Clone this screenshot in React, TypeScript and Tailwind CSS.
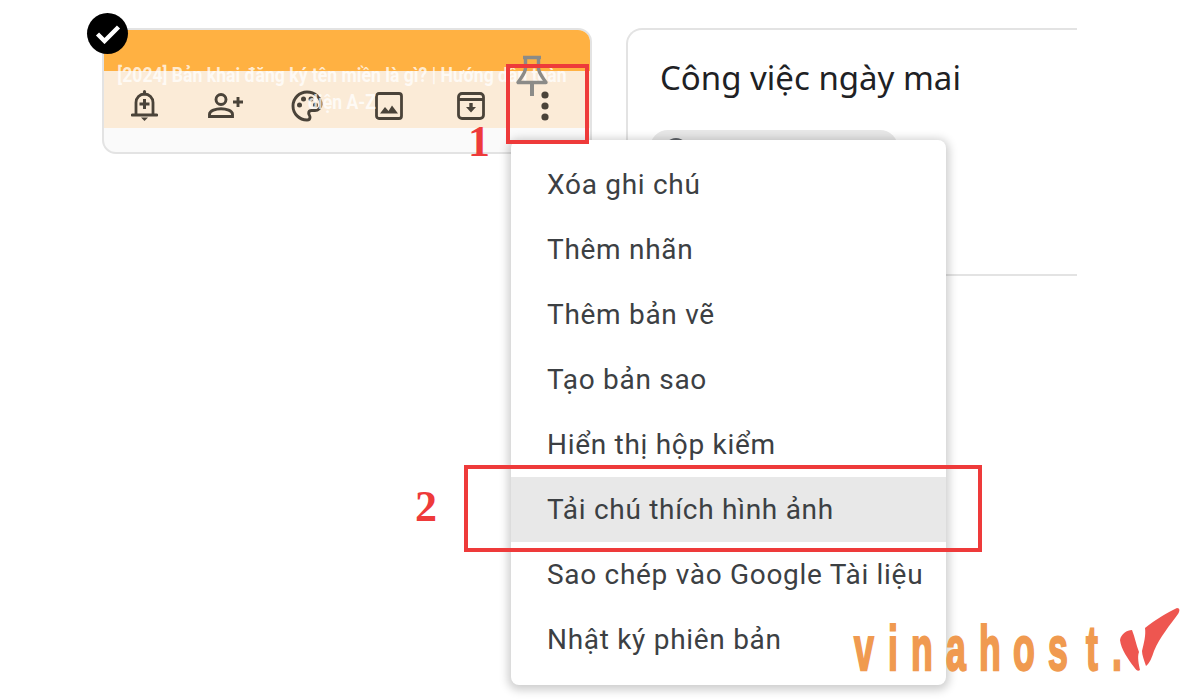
const ink = '#4a4339';

function BellIcon() {
  return (
    <svg width="27" height="31" viewBox="0 0 27 31" fill="none" stroke={ink} strokeWidth="2.8">
      <path d="M5 25V12.5a8.5 8.5 0 0 1 17 0V25" />
      <path d="M1.5 25h24" strokeWidth="3.2" strokeLinecap="round" />
      <path d="M13.5 1.5v2.5" strokeWidth="3" strokeLinecap="round" />
      <path d="M13.5 9v10M8.5 14h10" strokeWidth="3" />
      <path d="M10 27.5h7l-3.5 3.5z" fill={ink} stroke="none" />
    </svg>
  );
}

function PersonAddIcon() {
  return (
    <svg width="35" height="25" viewBox="0 0 35 25" fill="none" stroke={ink} strokeWidth="2.9">
      <circle cx="13" cy="6.5" r="5" />
      <path d="M1.5 23.5v-2.2c0-3.6 6.5-5.6 11.5-5.6s11.5 2 11.5 5.6v2.2z" />
      <path d="M25 9h10M30 4v10" strokeWidth="2.9" />
    </svg>
  );
}

function PaletteIcon() {
  return (
    <svg width="32" height="32" viewBox="0 0 32 32" fill="none" stroke={ink} strokeWidth="2.9">
      <path d="M16 2a14 14 0 0 0 0 28c1.8 0 3-1.3 3-2.8 0-1.8-1.3-2.3-1.3-4 0-1.6 1.3-2.7 3-2.7H24a6 6 0 0 0 6-6C30 7.5 23.7 2 16 2z" />
      <circle cx="8.5" cy="15" r="2.5" fill={ink} stroke="none" />
      <circle cx="12.5" cy="9" r="2.5" fill={ink} stroke="none" />
      <circle cx="20" cy="9" r="2.5" fill={ink} stroke="none" />
      <circle cx="24.5" cy="15" r="2.5" fill={ink} stroke="none" />
    </svg>
  );
}

function ImageIcon() {
  return (
    <svg width="28" height="28" viewBox="0 0 28 28" fill="none" stroke={ink} strokeWidth="2.8">
      <rect x="1.5" y="1.5" width="25" height="25" rx="2.5" />
      <path d="M5 21.5l5-6.5 3.5 4 3.5-5.5 6 8z" fill={ink} stroke="none" />
    </svg>
  );
}

function ArchiveIcon() {
  return (
    <svg width="28" height="28" viewBox="0 0 28 28" fill="none" stroke={ink} strokeWidth="2.8">
      <rect x="1.5" y="1.5" width="25" height="25" rx="3.5" />
      <path d="M1.5 7.5h25" />
      <path d="M12.3 11h3.4v4h3.3L14 20.5 9 15h3.3z" fill={ink} stroke="none" />
    </svg>
  );
}

function DotsIcon() {
  return (
    <svg width="8" height="30" viewBox="0 0 8 30" fill={ink}>
      <circle cx="4" cy="4" r="3.6" />
      <circle cx="4" cy="15" r="3.6" />
      <circle cx="4" cy="26" r="3.6" />
    </svg>
  );
}

function PinIcon() {
  return (
    <svg width="34" height="42" viewBox="0 0 34 42" fill="none" stroke="#8b8b88" strokeWidth="3.4" strokeLinejoin="round">
      <path d="M8 2.5h18M10.5 2.5V13c0 5-4 9-7.5 14.500h28C27.500 22 23.500 18 23.500 13V2.500" />
      <path d="M17 27.500V41" strokeWidth="4" />
    </svg>
  );
}

function LogoMark() {
  return (
    <svg width="62" height="68" viewBox="0 0 62 68" fill="#ee5650">
      <path d="M2 35C3 29 9 25 14 25 17 32 18 40 21 47 19 52 21 60 22 65 20 67 18 65 16 62 10 54 3 44 2 35z" />
      <path d="M27 23C37 15 50 7 59 3 62 3 62 6 60 9 52 20 42 32 36 46 34 52 32 58 28 61 26 55 24 50 24 46 26 38 28 30 27 23z" />
    </svg>
  );
}

const menuItems = [
  'Xóa ghi chú',
  'Thêm nhãn',
  'Thêm bản vẽ',
  'Tạo bản sao',
  'Hiển thị hộp kiểm',
  'Tải chú thích hình ảnh',
  'Sao chép vào Google Tài liệu',
  'Nhật ký phiên bản',
];

export default function App() {
  return (
    <div className="relative w-[1200px] h-[700px] overflow-hidden bg-white font-['Roboto',sans-serif]">
      <div className="flex items-start gap-[34px] pl-[102px] pt-[28px]">
        {/* note card */}
        <div className="relative w-[490px] h-[126px] shrink-0 rounded-[14px] border-2 border-[#e3e3e3] bg-[#fafafa] overflow-hidden">
          <div className="h-[41px] bg-[#ffb142]" />
          <div className="relative h-[57px] bg-[#fbebd7]">
            <div className="flex items-center h-full pt-[12px]">
              <div className="w-[81px] flex justify-center"><BellIcon /></div>
              <div className="w-[81px] flex justify-center"><PersonAddIcon /></div>
              <div className="w-[82px] flex justify-center"><PaletteIcon /></div>
              <div className="w-[82px] flex justify-center"><ImageIcon /></div>
              <div className="w-[81.5px] flex justify-center"><ArchiveIcon /></div>
              <div className="w-[67px] flex justify-center"><DotsIcon /></div>
            </div>
            <div className="absolute -top-[9px] left-[7px] w-[525px] origin-left scale-x-[0.88] text-center text-white/75 text-[20px] leading-[27px] font-bold whitespace-nowrap">
              <div>[2024] Bản khai đăng ký tên miền là gì? | Hướng dẫn toàn</div>
              <div>diện A-Z</div>
            </div>
          </div>
        </div>

        {/* second note, runs off to the right */}
        <div className="w-[451px] h-[248px] shrink-0 rounded-tl-[16px] border-l-2 border-t-2 border-b-2 border-[#e3e3e3] pl-[32px] pt-[26px]">
          <h2 className="text-[33px] leading-[44px] text-[#202124] font-['Noto_Sans',sans-serif]">Công việc ngày mai</h2>
          <div className="-ml-[10px] mt-[30px] w-[248px] h-[24px] rounded-t-[18px] bg-[#e8e8e8] pl-[14px] pt-[8px] overflow-hidden">
            <div className="w-[24px] h-[24px] rounded-full border-2 border-[#5f6368]" />
          </div>
        </div>
      </div>

      {/* pin icon over the card */}
      <div className="absolute left-[515px] top-[55px]"><PinIcon /></div>

      {/* selected check */}
      <div className="absolute left-[87px] top-[13px] w-[41px] h-[41px] rounded-full bg-black flex items-center justify-center">
        <svg width="26" height="20" viewBox="0 0 26 20" fill="none" stroke="#fff" strokeWidth="4.4">
          <path d="M2.500 10l7 7L23.500 3" />
        </svg>
      </div>

      {/* more menu */}
      <div className="absolute left-[511px] top-[140px] w-[435px] h-[545px] py-[12px] rounded-[8px] bg-white shadow-[0_2px_10px_3px_rgba(0,0,0,0.2)]">
        {menuItems.map((item, i) => (
          <div
            key={item}
            className={`h-[65px] pl-[36px] flex items-center text-[28px] tracking-[0.7px] text-[#3c4043] whitespace-nowrap ${i === 5 ? 'bg-[#e8e8e8]' : ''}`}
          >
            {item}
          </div>
        ))}
      </div>

      {/* annotations */}
      <div className="absolute left-[506px] top-[64px] w-[83px] h-[80px] border-[4px] border-[#ee3a3a]" />
      <div className="absolute left-[464px] top-[465px] w-[518px] h-[87px] border-[4px] border-[#ee3a3a]" />
      <div className="absolute left-[468px] top-[120px] text-[44px] leading-[44px] font-bold text-[#ee3a3a] font-['Liberation_Serif',serif]">1</div>
      <div className="absolute left-[415px] top-[485px] text-[44px] leading-[44px] font-bold text-[#ee3a3a] font-['Liberation_Serif',serif]">2</div>

      {/* watermark */}
      <div className="absolute left-[847px] top-[636px] flex h-[50px] font-bold text-[42px] leading-[50px] text-[#f09a50] [-webkit-text-stroke:1.5px_#f09a50] font-['Liberation_Sans',sans-serif]">
        <span className="w-[34px] text-center scale-x-[0.85] scale-y-[1.5] origin-bottom">v</span>
        <span className="w-[24px] text-center scale-x-[0.85] scale-y-[1.5] origin-bottom">i</span>
        <span className="w-[34px] text-center scale-x-[0.85] scale-y-[1.5] origin-bottom">n</span>
        <span className="w-[34px] text-center scale-x-[0.85] scale-y-[1.5] origin-bottom">a</span>
        <span className="w-[34px] text-center scale-x-[0.85] scale-y-[1.5] origin-bottom">h</span>
        <span className="w-[34px] text-center scale-x-[0.85] scale-y-[1.5] origin-bottom">o</span>
        <span className="w-[34px] text-center scale-x-[0.85] scale-y-[1.5] origin-bottom">s</span>
        <span className="w-[34px] text-center scale-x-[0.85] scale-y-[1.5] origin-bottom">t</span>
        <span className="w-[16px] text-center scale-x-[0.85] scale-y-[1.5] origin-bottom">.</span>
      </div>
      <div className="absolute left-[1118px] top-[605px]"><LogoMark /></div>
    </div>
  );
}
